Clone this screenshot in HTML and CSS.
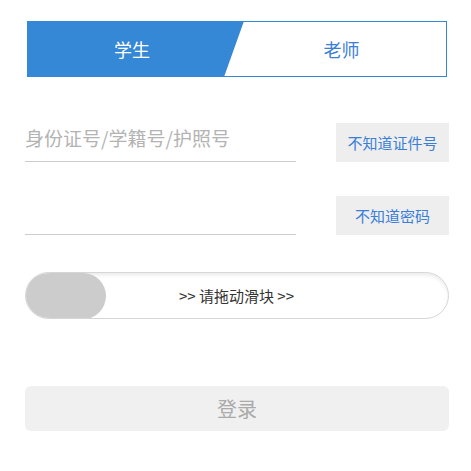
FILE: index.html
```html
<!DOCTYPE html>
<html lang="zh-CN">
<head>
<meta charset="utf-8">
<link rel="stylesheet" href="styles.css">
</head>
<body>
<div class="page">
  <div class="tabs">
    <div class="tab tab-active">学生</div>
    <div class="tab tab-other">老师</div>
  </div>
  <div class="form">
    <div class="row row-first">
      <input class="field" type="text" placeholder="身份证号/学籍号/护照号">
      <button class="help">不知道证件号</button>
    </div>
    <div class="row">
      <input class="field" type="password">
      <button class="help">不知道密码</button>
    </div>
    <div class="slider">
      <div class="knob"></div>
      <div class="slider-text">&gt;&gt; 请拖动滑块 &gt;&gt;</div>
    </div>
    <button class="login">登录</button>
  </div>
</div>
</body>
</html>
```
FILE: styles.css
```css
* { box-sizing: border-box; }
html, body { margin: 0; padding: 0; background: #fff; }
body {
  font-family: "Noto Sans CJK SC", "Noto Sans", sans-serif;
}
.page {
  width: 424px;
  margin-left: 25px;
  padding-top: 21px;
}
.tabs {
  display: flex;
  height: 56px;
  margin: 0 2px;
}
.tab {
  display: flex;
  align-items: center;
  justify-content: center;
  font-size: 18px;
}
.tab-active {
  flex: 0 0 217px;
  padding-right: 7px;
  background: #3588d6;
  color: #fff;
  clip-path: polygon(0 0, 100% 0, calc(100% - 20px) 100%, 0 100%);
}
.tab-other {
  flex: 1;
  margin-left: -20px;
  padding-left: 13px;
  border: 1px solid #3588d6;
  border-left: none;
  color: #3a7ed6;
}
.form {
  padding-top: 46px;
}
.row {
  display: flex;
  justify-content: space-between;
  align-items: flex-end;
  margin-bottom: 34px;
}
.field {
  width: 271px;
  height: 39px;
  border: none;
  border-bottom: 1px solid #cccccc;
  outline: none;
  padding: 0 0 9px 0;
  font-family: inherit;
  font-size: 19px;
  color: #333;
  background: transparent;
}
.field::placeholder { color: #b3b3b3; }
.help {
  width: 113px;
  height: 39px;
  border: none;
  background: #eeeeee;
  color: #3a7ed6;
  font-family: inherit;
  font-size: 15px;
  padding: 0;
}
.slider {
  display: flex;
  align-items: center;
  height: 47px;
  margin-top: 37px;
  border: 1px solid #d6d6d6;
  border-radius: 24px;
  box-shadow: inset 0 3px 4px -1px rgba(0,0,0,0.09);
  overflow: hidden;
}
.knob {
  flex: 0 0 81px;
  height: 46px;
  margin-left: -1px;
  border-radius: 23px;
  background: #cccccc;
  box-shadow: -1px 1px 1px rgba(0,0,0,0.08);
}
.slider-text {
  flex: 1;
  text-align: center;
  font-size: 15px;
  color: #333;
  padding-right: 81px;
}
.login {
  display: block;
  width: 424px;
  height: 45px;
  margin-top: 67px;
  border: none;
  border-radius: 6px;
  background: #f0f0f0;
  color: #aaaaaa;
  font-family: inherit;
  font-size: 20px;
  padding: 0;
}
```
